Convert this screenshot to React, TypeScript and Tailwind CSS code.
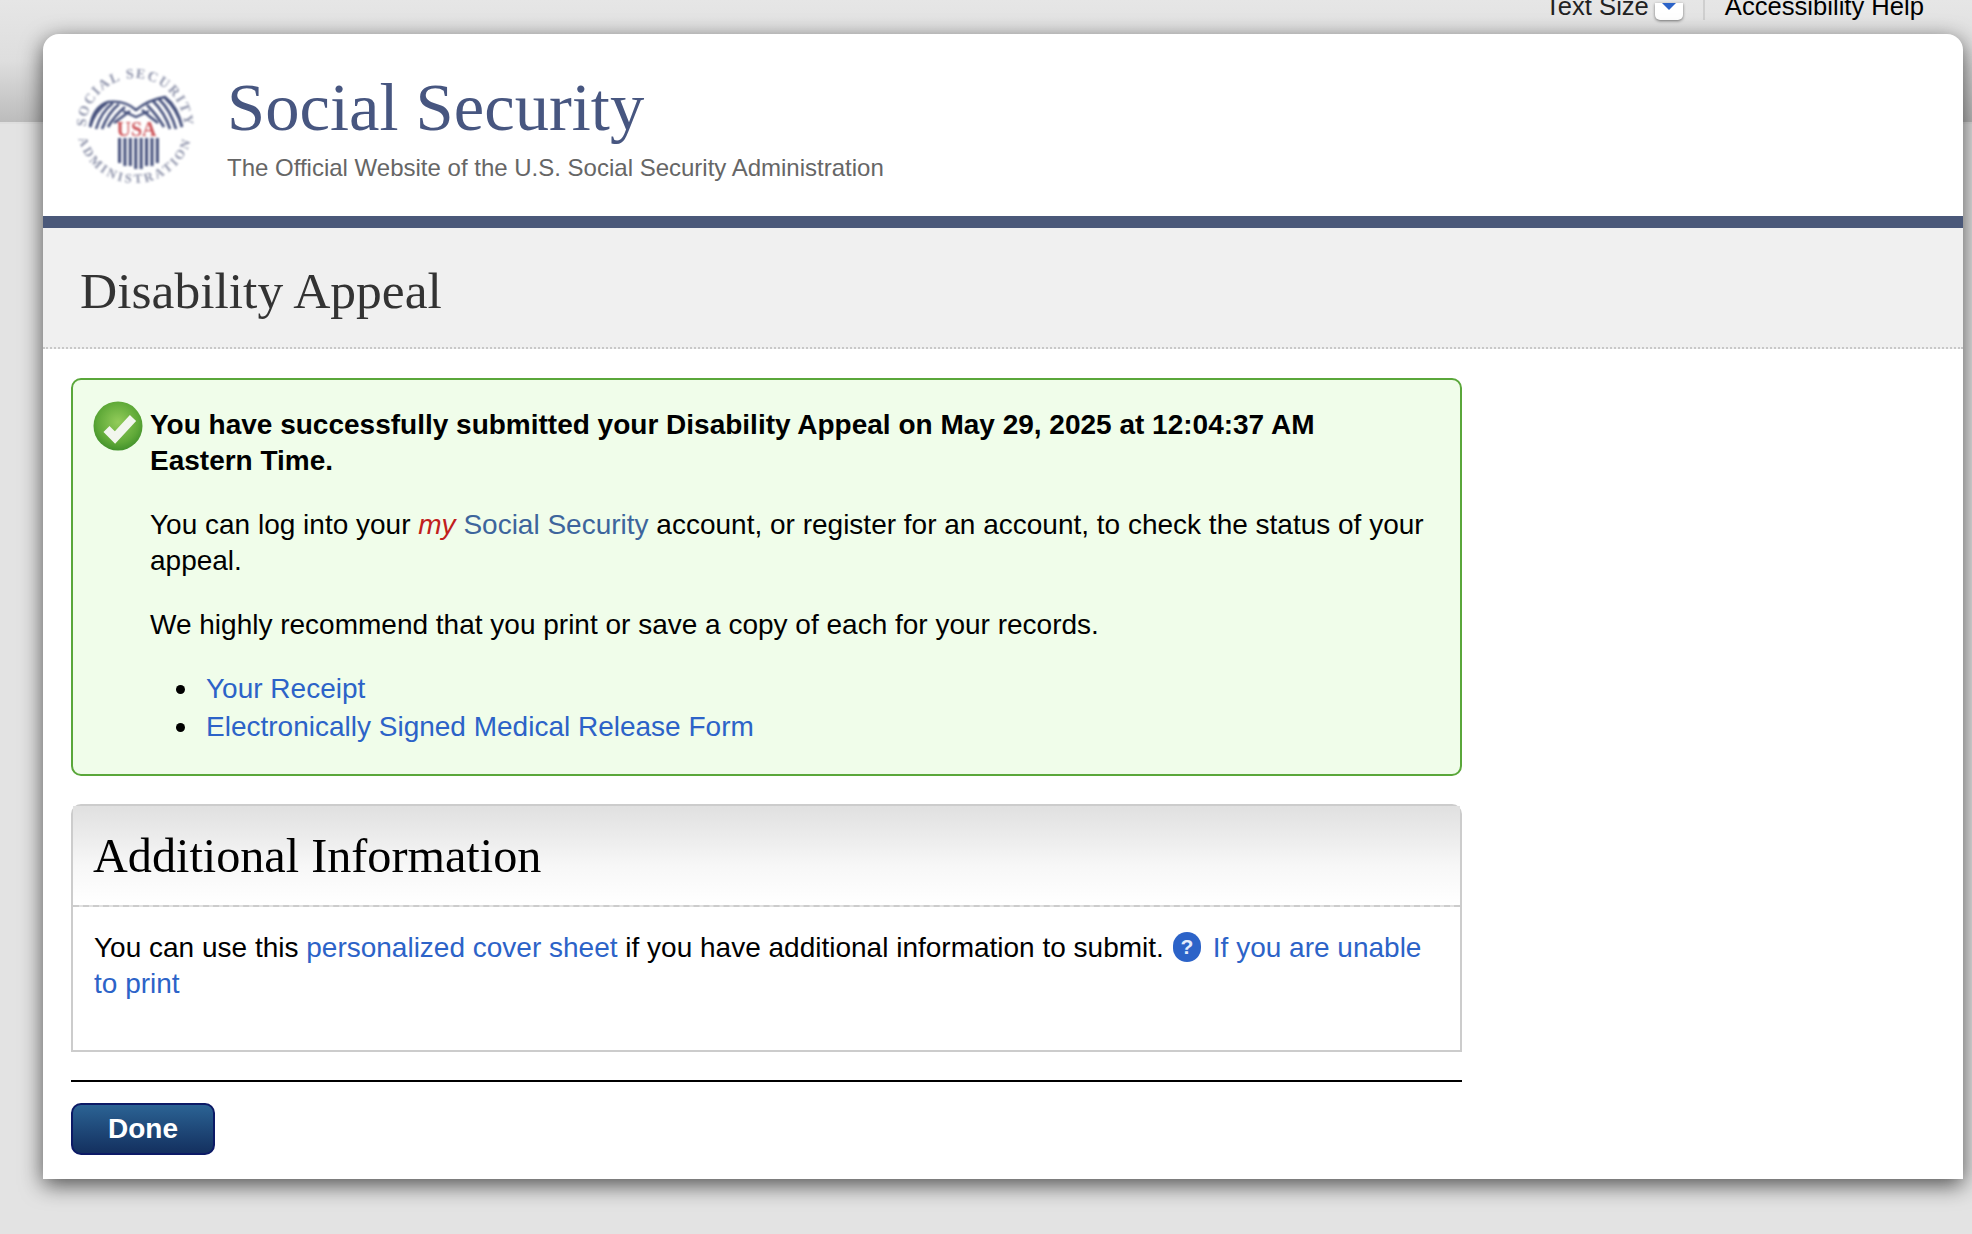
const serif = "font-['Liberation_Serif',serif]";

function SealLogo() {
  // feather tips fan out from the wing tops down to the outer edge
  const leftFeathers = [
    'M32 36 Q20 44 15 60',
    'M38 36 Q26 45 21 62',
    'M44 37 Q33 46 27 62',
    'M50 40 Q40 48 33 60',
    'M55 44 Q47 50 39 56',
  ];
  const rightFeathers = [
    'M90 31 Q102 42 107 60',
    'M84 32 Q96 44 101 62',
    'M78 34 Q90 46 95 62',
    'M72 38 Q82 48 89 60',
    'M67 43 Q75 50 83 56',
  ];
  const bars = [0, 1, 2, 3, 4, 5, 6, 7];
  return (
    <svg viewBox="0 0 120 120" className="h-[120px] w-[120px] shrink-0 blur-[0.8px]">
      <defs>
        <path id="seal-top" d="M12 70 A49 49 0 1 1 108 70" />
        <path id="seal-bottom" d="M2 58 A58 58 0 0 0 118 58" />
      </defs>
      <text fill="#8f94ab" fontFamily="'Liberation Serif', serif" fontWeight="700" fontSize="14" letterSpacing="1.6" textAnchor="middle">
        <textPath href="#seal-top" startOffset="50%">SOCIAL SECURITY</textPath>
      </text>
      <text fill="#8f94ab" fontFamily="'Liberation Serif', serif" fontWeight="700" fontSize="13" letterSpacing="2.6" textAnchor="middle">
        <textPath href="#seal-bottom" startOffset="50%">ADMINISTRATION</textPath>
      </text>
      <path d="M15 60 Q18 40 33 35 Q50 33 61 43 Q73 33 90 30 Q103 40 107 60" fill="none" stroke="#45507c" strokeWidth="2.4" />
      {leftFeathers.concat(rightFeathers).map((d) => (
        <path key={d} d={d} fill="none" stroke="#45507c" strokeWidth="2.6" />
      ))}
      <path d="M48 44 L61 50 L74 44" fill="none" stroke="#45507c" strokeWidth="2.2" />
      <text x="61.5" y="68.5" textAnchor="middle" fill="#cc5358" fontFamily="'Liberation Serif', serif" fontWeight="700" fontSize="20">USA</text>
      {bars.map((b) => (
        <rect key={b} x={43 + b * 5.4} y={71} width="3.1" height={b === 3 || b === 4 ? 31 : b === 0 || b === 7 ? 25 : 28} fill="#45507c" />
      ))}
    </svg>
  );
}

function CheckBadge() {
  return (
    <svg viewBox="0 0 50 50" className="absolute left-[20px] top-[21px] h-[50px] w-[50px]">
      <defs>
        <radialGradient id="check-bg" cx="50%" cy="42%" r="60%">
          <stop offset="0%" stopColor="#93cc5a" />
          <stop offset="70%" stopColor="#5fa938" />
          <stop offset="100%" stopColor="#3f8f2a" />
        </radialGradient>
      </defs>
      <circle cx="25" cy="25" r="24.5" fill="url(#check-bg)" />
      <path d="M13.5 28 L22 36.5 L40 17" fill="none" stroke="#f2f6ee" strokeWidth="8.5" />
    </svg>
  );
}

function HelpBadge() {
  return (
    <span className="relative top-[-3px] ml-[9px] mr-[12px] inline-flex h-[30px] w-[28px] items-center justify-center rounded-full bg-[#2c63c8] align-middle text-[21px] font-bold leading-none text-[#e3ecfb]">
      ?
    </span>
  );
}

function Bullet({ children }: { children: string }) {
  return (
    <li className="flex items-center">
      <span className="mr-[21px] h-[9px] w-[9px] rounded-full bg-black" />
      {children}
    </li>
  );
}

export default function App() {
  return (
    <div className="relative h-[1234px] w-[1972px] overflow-hidden bg-[#e3e3e3] font-['Liberation_Sans',sans-serif] text-[28px] text-black">
      <div className="flex h-[124px] items-start justify-end border-b-2 border-[#dedede] bg-gradient-to-b from-[#e6e6e6] via-[#dedede] to-[#bcbcbc] pr-[48px]">
        <div className="flex h-[20px] items-end">
          <span className="relative top-[-4px] text-[25.6px] leading-[20px] text-[#222]">Text Size</span>
          <span className="relative ml-[6px] h-[17px] w-[28px] rounded-b-[5px] bg-white shadow-[0_1px_3px_rgba(0,0,0,0.5)]">
            <span className="absolute left-[7px] top-0 h-0 w-0 border-x-[7px] border-t-[7px] border-x-transparent border-t-[#2c63c8]" />
          </span>
          <span className="mx-[20px] h-[20px] w-[2px] bg-[#cfcfcf]" />
          <span className="relative top-[-4px] text-[25.6px] leading-[20px]">Accessibility Help</span>
        </div>
      </div>

      <div className="absolute left-[43px] top-[34px] h-[1145px] w-[1920px] rounded-t-[16px] bg-white shadow-[0_6px_22px_rgba(0,0,0,0.65)]">
        <header className="flex h-[182px] items-start pl-[32px] pt-[33px]">
          <SealLogo />
          <div className="ml-[32px]">
            <div className={`${serif} text-[68.6px] leading-[80px] text-[#475680]`}>Social Security</div>
            <div className="mt-[6px] text-[24px] leading-[30px] text-[#666]">
              The Official Website of the U.S. Social Security Administration
            </div>
          </div>
        </header>
        <div className="h-[12px] bg-[#4a5879]" />
        <div className="flex h-[121px] items-center border-b-2 border-dotted border-[#c8c8c8] bg-[#f0f0f0] pl-[37px] pt-[7px]">
          <h1 className={`${serif} text-[51.5px] font-normal text-[#333]`}>Disability Appeal</h1>
        </div>

        <main className="w-[1391px] pl-[28px] pt-[29px]">
          <section className="relative h-[398px] w-[1391px] rounded-[10px] border-2 border-[#5aa73a] bg-[#f0fdea] pl-[77px] pr-[34px] pt-[27px] leading-[36px]">
            <CheckBadge />
            <p className="font-bold">
              You have successfully submitted your Disability Appeal on May 29, 2025 at 12:04:37 AM
              <br />
              Eastern Time.
            </p>
            <p className="mt-[28px]">
              You can log into your <em className="text-[#c1201c]">my</em>{' '}
              <span className="text-[#3d659c]">Social Security</span> account, or register for an account, to check the status of your appeal.
            </p>
            <p className="mt-[28px]">We highly recommend that you print or save a copy of each for your records.</p>
            <ul className="mt-[27px] pl-[26px] leading-[38px] text-[#2c63c8]">
              <Bullet>Your Receipt</Bullet>
              <Bullet>Electronically Signed Medical Release Form</Bullet>
            </ul>
          </section>

          <section className="mt-[28px] h-[248px] w-[1391px] rounded-t-[10px] border-2 border-[#cccccc]">
            <div className="flex h-[101px] items-center border-b-2 border-dashed border-[#cccccc] bg-gradient-to-b from-[#e0e0e0] via-[#f7f7f7] via-60% to-white pl-[20px] pt-[1px]">
              <h2 className={`${serif} text-[48.2px] font-normal`}>Additional Information</h2>
            </div>
            <p className="pl-[21px] pr-[20px] pt-[23px] leading-[36px]">
              You can use this <span className="text-[#2c63c8]">personalized cover sheet</span> if you have additional information to submit.
              <HelpBadge />
              <span className="text-[#2c63c8]">If you are unable to print</span>
            </p>
          </section>

          <div className="mt-[28px] h-[2px] w-[1391px] bg-black" />
          <button className="mt-[21px] h-[52px] w-[144px] rounded-[10px] border-2 border-[#0c1a66] bg-gradient-to-b from-[#2b6394] to-[#14305f] text-[28px] font-bold text-white">
            Done
          </button>
        </main>
      </div>
    </div>
  );
}
